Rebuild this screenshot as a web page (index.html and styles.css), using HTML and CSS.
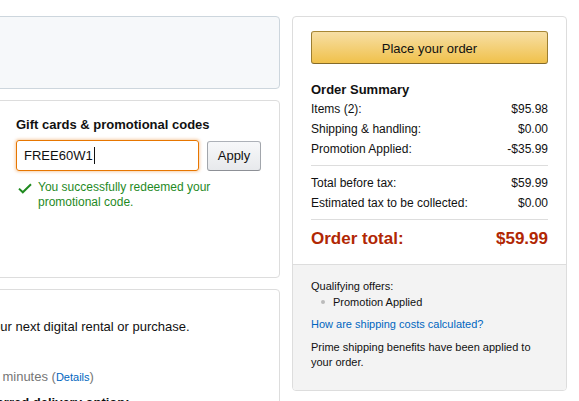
FILE: index.html
```html
<!DOCTYPE html>
<html lang="en">
<head>
<meta charset="utf-8">
<title>Checkout</title>
<link rel="stylesheet" href="styles.css">
</head>
<body>
<div class="page">
  <div class="main">
    <div class="box notice"></div>
    <div class="box payment">
      <div class="pay-left"></div>
      <div class="promo">
        <h3 class="promo-title">Gift cards &amp; promotional codes</h3>
        <div class="promo-form">
          <div class="promo-input">FREE60W1<span class="caret"></span></div>
          <button class="apply-btn">Apply</button>
        </div>
        <div class="success">
          <svg class="check" width="14" height="11" viewBox="0 0 14 11"><path d="M1 5.6 L4.8 9.3 L13 1.2" fill="none" stroke="#1f8a1f" stroke-width="2"/></svg>
          <span class="success-text">You successfully redeemed your promotional code.</span>
        </div>
      </div>
    </div>
    <div class="box shipping">
      <p class="ship-line">Get a reward for your next digital rental or purchase.</p>
      <p class="ship-time">Delivered within 30 minutes (<a class="details" href="#">Details</a>)</p>
      <p class="ship-head">Choose your preferred delivery option:</p>
    </div>
  </div>
  <aside class="summary">
    <div class="summary-main">
      <button class="place-btn">Place your order</button>
      <h3 class="sum-title">Order Summary</h3>
      <div class="sum-row"><span>Items (2):</span><span>$95.98</span></div>
      <div class="sum-row"><span>Shipping &amp; handling:</span><span>$0.00</span></div>
      <div class="sum-row"><span>Promotion Applied:</span><span>-$35.99</span></div>
      <hr class="sum-divider">
      <div class="sum-row"><span>Total before tax:</span><span>$59.99</span></div>
      <div class="sum-row"><span>Estimated tax to be collected:</span><span>$0.00</span></div>
      <hr class="sum-divider">
      <div class="sum-total"><span>Order total:</span><span>$59.99</span></div>
    </div>
    <div class="summary-foot">
      <p class="foot-label">Qualifying offers:</p>
      <ul class="offers"><li>Promotion Applied</li></ul>
      <a class="foot-link" href="#">How are shipping costs calculated?</a>
      <p class="foot-note">Prime shipping benefits have been applied to your order.</p>
    </div>
  </aside>
</div>
</body>
</html>
```
FILE: styles.css
```css
* { box-sizing: border-box; }
html, body { margin: 0; padding: 0; }
body {
  font-family: "Liberation Sans", Arial, sans-serif;
  color: #111;
  background: #fff;
  overflow: hidden;
  width: 579px;
  height: 401px;
}
.page {
  display: flex;
  align-items: flex-start;
  gap: 12px;
  padding-top: 16px;
}
.main {
  width: 410px;
  margin-left: -130px;
  flex: none;
  display: flex;
  flex-direction: column;
  gap: 11px;
}
.box {
  border: 1px solid #ddd;
  border-radius: 4px;
  background: #fff;
}
.notice {
  height: 73px;
  background: #f6f8fa;
  border-color: #cdd6dd;
}
.payment {
  height: 178px;
  display: flex;
}
.pay-left { width: 129px; flex: none; }
.promo {
  flex: 1;
  padding: 14px 16px 0 16px;
}
.promo-title {
  margin: 0;
  font-size: 13px;
  line-height: 19px;
  font-weight: bold;
}
.promo-form {
  display: flex;
  align-items: center;
  gap: 8px;
  margin-top: 6px;
}
.promo-input {
  width: 183px;
  height: 31px;
  border: 1px solid #e77600;
  border-radius: 3px;
  box-shadow: 0 0 3px 1px rgba(228, 121, 17, 0.35);
  padding: 0 7px;
  font-size: 13px;
  line-height: 29px;
  display: flex;
  align-items: center;
}
.caret {
  display: inline-block;
  width: 1px;
  height: 17px;
  background: #111;
  margin-left: 1px;
}
.apply-btn {
  width: 54px;
  height: 30px;
  border: 1px solid #adb1b8;
  border-color: #adb1b8 #a2a6ac #8d9096;
  border-radius: 3px;
  background: linear-gradient(to bottom, #f7f8fa, #e7e9ec);
  font-family: "Liberation Sans", Arial, sans-serif;
  font-size: 13px;
  color: #111;
  padding: 0;
}
.success {
  display: flex;
  align-items: flex-start;
  margin-top: 9px;
  color: #1f8a1f;
  font-size: 12px;
  line-height: 15px;
}
.check { flex: none; margin: 3px 6px 0 2px; }
.success-text { max-width: 200px; }
.shipping {
  height: 140px;
  padding: 27px 18px 0 18px;
  white-space: nowrap;
}
.shipping p { margin: 0; font-size: 13px; line-height: 19px; }
.ship-time { color: #767676; margin-top: 31px !important; }
.details { color: #0066c0; text-decoration: none; font-size: 11px; }
.ship-head { font-weight: bold; margin-top: 6px !important; }
.summary {
  width: 275px;
  flex: none;
  border: 1px solid #ddd;
  border-radius: 4px;
  overflow: hidden;
}
.summary-main { padding: 14px 18px 13px 18px; }
.place-btn {
  display: block;
  width: 100%;
  height: 33px;
  border: 1px solid #a88734;
  border-color: #a88734 #9c7e31 #846a29;
  border-radius: 3px;
  background: linear-gradient(to bottom, #f7dfa5, #f0c14b);
  font-family: "Liberation Sans", Arial, sans-serif;
  font-size: 13px;
  color: #111;
  padding: 2px 0 0 0;
}
.sum-title {
  margin: 16px 0 0 0;
  font-size: 13px;
  line-height: 19px;
  font-weight: bold;
}
.sum-row {
  display: flex;
  justify-content: space-between;
  font-size: 12px;
  line-height: 20px;
}
.sum-divider {
  border: 0;
  border-top: 1px solid #ddd;
  margin: 6px 0 7px 0;
}
.sum-total {
  display: flex;
  justify-content: space-between;
  font-size: 17px;
  line-height: 24px;
  font-weight: bold;
  color: #b12704;
}
.summary-foot {
  background: #f3f3f3;
  border-top: 1px solid #ddd;
  padding: 13px 18px 20px 18px;
  font-size: 11px;
}
.foot-label { margin: 0; line-height: 16px; }
.offers {
  list-style: none;
  margin: 0;
  padding: 0 0 0 10px;
}
.offers li {
  line-height: 16px;
  display: flex;
  align-items: center;
}
.offers li::before {
  content: "";
  width: 4px;
  height: 4px;
  border-radius: 50%;
  background: #bbb;
  margin-right: 8px;
}
.foot-link {
  display: block;
  margin-top: 6px;
  line-height: 16px;
  color: #0066c0;
  text-decoration: none;
}
.foot-note { margin: 8px 0 0 0; line-height: 15px; }
```
